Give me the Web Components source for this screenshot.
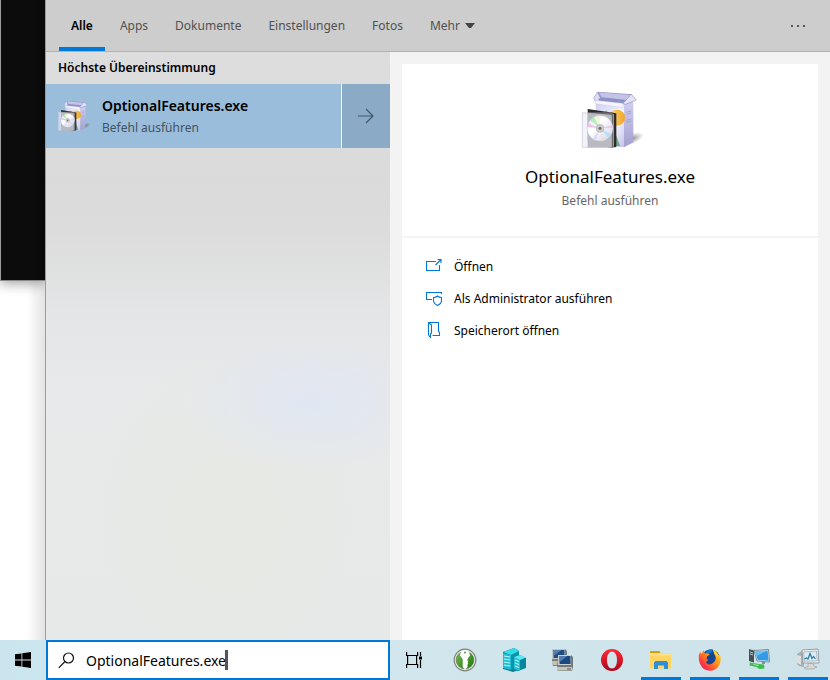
<!DOCTYPE html>
<html lang="de">
<head>
<meta charset="utf-8">
<title>Suche</title>
<style>
html, body { margin: 0; height: 100%; }
body { font-family: "Noto Sans", "Open Sans", sans-serif; font-size: 12px; color: #000; background: #fff; overflow: hidden; }
</style>
</head>
<body>
<search-screen></search-screen>

<template id="t-screen">
<style>
:host { display: flex; flex-direction: column; height: 100vh; }
.upper { flex: 1; display: flex; min-height: 0; }
desk-strip { flex: 0 0 45px; }
search-flyout { flex: 1; min-width: 0; }
</style>
<div class="upper"><desk-strip></desk-strip><search-flyout></search-flyout></div>
<task-bar></task-bar>
</template>

<template id="t-strip">
<style>
:host { display: block; background: linear-gradient(90deg, transparent 60%, #0000001c), #fff; overflow: hidden; }
.console { height: 280px; background: linear-gradient(90deg, #0c0c0c 75%, #080808); border-left: 1px solid #9c9fa0; border-bottom: 1px solid #8a8a8a; box-shadow: 0 2px 12px #00000066; }
</style>
<div class="console"></div>
</template>

<template id="t-flyout">
<style>
:host { display: flex; flex-direction: column; border-left: 1px solid #9d9d9d; }
.cols { flex: 1; display: flex; min-height: 0; }
result-list { flex: 0 0 344px; }
detail-pane { flex: 1; min-width: 0; }
</style>
<tab-strip></tab-strip>
<div class="cols"><result-list></result-list><detail-pane></detail-pane></div>
</template>

<template id="t-tabs">
<style>
:host { display: flex; justify-content: space-between; height: 51px; background: #cdcdcd; border-bottom: 1px solid #b2b2b2; padding: 0 12px 0 13px; }
nav { display: flex; gap: 3px; }
button { font: inherit; border: 0; background: none; color: #515151; padding: 0 12px; display: flex; align-items: center; gap: 5px; border-top: 4px solid transparent; border-bottom: 4px solid transparent; }
button.on { color: #000; font-weight: 600; border-bottom-color: #0078d7; }
</style>
<nav>
<button class="on">Alle</button><button>Apps</button><button>Dokumente</button><button>Einstellungen</button><button>Fotos</button>
<button>Mehr <svg width="10" height="6"><path d="M0 0h10L6 5H4z" fill="#444"/></svg></button>
</nav>
<button aria-label="Optionen"><svg width="16" height="4"><path d="M1 1h2v2h-2zM7 1h2v2h-2zM13 1h2v2h-2z" fill="#555"/></svg></button>
</template>

<template id="t-results">
<style>
:host { display: block; background:
 radial-gradient(ellipse 130px 70px at 265px 350px, #dfe6f4cc, #dfe6f400),
 radial-gradient(ellipse 140px 170px at 180px 470px, #e7e9e1aa, #e7e9e100),
 linear-gradient(180deg, #dddddd 0, #dadada 130px, #dcdcdc 180px, #e4e5e6 260px, #e7e9ea 340px, #e7e9e9 100%); }
h2 { margin: 0; padding: 0 12px; font-size: 12px; line-height: 32px; font-weight: 600; }
.hit { display: flex; height: 64px; gap: 1px; background: #f4f8fb; }
button { font: inherit; border: 0; padding: 0; text-align: left; }
.main { flex: 1; display: flex; align-items: center; gap: 12px; padding-left: 10px; background: #9abddc; }
.go { flex: 0 0 48px; display: grid; place-items: center; background: #8aaac5; }
b { display: block; font-size: 14px; line-height: 24px; font-weight: 600; }
small { display: block; font-size: 12px; line-height: 20px; color: #42525f; }
</style>
<h2>Höchste Übereinstimmung</h2>
<div class="hit">
<button class="main"><features-icon size="34"></features-icon><span><b>OptionalFeatures.exe</b><small>Befehl ausführen</small></span></button>
<button class="go" aria-label="Details"><svg width="18" height="16" fill="none" stroke="#43596b" stroke-width="1.2"><path d="M1 8h15M9 1l7 7-7 7"/></svg></button>
</div>
</template>

<template id="t-detail">
<style>
:host { display: flex; flex-direction: column; gap: 2px; background: #f3f3f3; padding: 12px 12px 0; box-sizing: border-box; }
header { background: #fff; height: 172px; box-sizing: border-box; padding-top: 26px; display: flex; flex-direction: column; align-items: center; }
h1 { margin: 13px 0 0; font-size: 17px; line-height: 28px; font-weight: 400; }
p { margin: 0; line-height: 20px; color: #666; }
ul { flex: 1; margin: 0; padding: 12px 24px; list-style: none; background: #fff; }
button { font: inherit; border: 0; background: none; padding: 0; height: 32px; display: flex; align-items: center; gap: 12px; color: #000; }
svg { fill: none; stroke: #0078d7; stroke-width: 1.1; }
</style>
<header><features-icon size="64"></features-icon><h1>OptionalFeatures.exe</h1><p>Befehl ausführen</p></header>
<ul>
<li><button><svg width="16" height="16"><path d="M10 3.500H.5v9h13V7M9.500 7L15 1.500M11.500 1.500H15V5"/></svg>Öffnen</button></li>
<li><button><svg width="16" height="16"><path d="M6 9.500H.5v-7h15V4M7.500 7.500c2 0 3-.5 4-1.500 1 1 2 1.500 4 1.500v3c0 2.500-2 4-4 5-2-1-4-2.500-4-5z"/></svg>Als Administrator ausführen</button></li>
<li><button><svg width="16" height="16"><path d="M2.500 13V.5h10v9l1 1v3H6.500M2.500.5l3 2.500v8l-1 1v3.500L2.500 13"/></svg>Speicherort öffnen</button></li>
</ul>
</template>

<template id="t-features">
<style>:host { display: block; flex: none; } svg { display: block; }</style>
<svg viewBox="9 15 192 180" role="img" aria-label="Softwarepaket" overflow="visible">
<defs>
<linearGradient id="f" x2="1" y2="1"><stop stop-color="#cfcff2"/><stop offset=".6" stop-color="#f4f4ff"/><stop offset="1" stop-color="#c3c3ea"/></linearGradient>
<linearGradient id="s" x2="0" y2="1"><stop stop-color="#cfcef0"/><stop offset="1" stop-color="#a3a1ce"/></linearGradient>
<linearGradient id="o" x2="1"><stop stop-color="#ffd878"/><stop offset="1" stop-color="#f2a52a"/></linearGradient>
<linearGradient id="c" x2="1" y2="1"><stop stop-color="#e0e6ea"/><stop offset=".4" stop-color="#fff"/><stop offset="1" stop-color="#cfcff0"/></linearGradient>
<radialGradient id="sh"><stop stop-color="#555" stop-opacity=".75"/><stop offset="1" stop-color="#777" stop-opacity="0"/></radialGradient>
</defs>
<ellipse cx="168" cy="162" rx="40" ry="16" transform="rotate(-20 168 162)" fill="url(#sh)"/>
<path d="M62 48l85 9v130l-85-8z" fill="url(#f)"/>
<path d="M147 57l28-6v121l-28 15z" fill="url(#s)"/>
<path d="M68 90l28-14 22 49H72z" fill="#9bc8b1"/><path d="M112 122l24 62-28-2z" fill="#6fa888"/>
<circle cx="126" cy="98" r="24" fill="url(#o)"/>
<path d="M68 20l102 8 2 23-26 6-74-9z" fill="#8f90c4"/><path d="M71 22l97 8-4 16-84-9z" fill="#c3c3e8"/>
<path d="M68 21l8 18-14 12-6-12z" fill="#dcdcf6" stroke="#9797c5" stroke-width="2"/>
<path d="M60 46l84 9-1 13-82-12z" fill="#f6f6ff" stroke="#adadd4"/>
<path d="M169 28l15 17-32 13-9-2z" fill="#e3e3fa" stroke="#9999c4" stroke-width="2"/>
<path d="M154 82l15-4M154 88l15-4M154 106l15-4M154 112l15-4" stroke="#9897c0" stroke-width="2"/>
<path d="M38 72l86 13v101l-18 2L38 172z" fill="#2c2c2c"/>
<path d="M38 82h75v105H38z" fill="#6e6e72"/><path d="M113 87h4v98h-4z" fill="#999"/>
<path d="M22 83l87 8v96H22z" fill="#ebebfa" fill-opacity=".6" stroke="#c4c4d0" stroke-width="2"/>
<circle cx="75" cy="130" r="39" fill="url(#c)" stroke="#aaa"/>
<g opacity=".65"><path d="M75 130L45 106l12-11z" fill="#96e8a3"/><path d="M75 130L36 126l3-12z" fill="#eea9de"/><path d="M75 130L64 93l8-2z" fill="#eef3a8"/><path d="M75 130l34 18-9 11z" fill="#a9ddf5"/><path d="M75 130l39-1-1-9z" fill="#eeb9da"/><path d="M75 130l-22 32 9 5z" fill="#d9cff5"/><path d="M75 130l4 39 9-2z" fill="#f2e4bd"/></g>
<circle cx="75" cy="130" r="12" fill="#ccc" stroke="#999"/><circle cx="75" cy="130" r="5" fill="#777"/>
</svg>
</template>

<template id="t-taskbar">
<style>
:host { display: flex; height: 40px; background: linear-gradient(90deg, #cbe5ee, #d1e6ed 45%, #cde2e9); }
button { font: inherit; border: 0; padding: 0; background: none; display: grid; place-items: center; box-sizing: border-box; }
.start { flex: 0 0 46px; }
label { flex: 0 0 344px; box-sizing: border-box; border: 2px solid #0078d7; background: #fff; display: flex; align-items: center; padding-left: 10px; }
input { border: 0; outline: 0; padding: 0; margin: 0 0 0 11px; width: 139px; field-sizing: content; font: 14px "Noto Sans", sans-serif; color: #000; background: none; }
.caret { width: 3px; height: 20px; background: #555; }
.view { flex: 0 0 48px; }
.apps { display: flex; gap: 9px; padding-left: 7px; }
.apps button { width: 40px; border-top: 3px solid transparent; border-bottom: 3px solid transparent; }
.apps button.run { border-bottom-color: #0078d7; }
svg { display: block; }
</style>
<button class="start" aria-label="Start"><svg width="16" height="16"><path d="M0 2.300L6.500 1.400V7.500H0zM7.300 1.300L16 0V7.500H7.300zM0 8.400H6.500V14.600L0 13.700zM7.300 8.400H16V16L7.300 14.700z"/></svg></button>
<label><svg width="17" height="17" fill="none" stroke="#111" stroke-width="1.2"><circle cx="10.500" cy="6" r="5"/><path d="M7 9.500L.8 15.800"/></svg><input aria-label="Suche" value="OptionalFeatures.exe" spellcheck="false"><span class="caret"></span></label>
<button class="view" aria-label="Aktive Anwendungen"><svg width="17" height="16" fill="none" stroke="#000" stroke-width="1.200"><path d="M.6 0v3.500h11V0M.6 16v-3.500h11V16M1.600 3.500v9M10.600 3.500v9M14.500 0v4M14.500 8v8"/><path d="M13 4.500h3v3h-3z" fill="#000" stroke="none"/></svg></button>
<div class="apps">
<button aria-label="KeePass"><svg width="24" height="24"><defs><linearGradient id="k" x2="1" y2="1"><stop stop-color="#7cb65c"/><stop offset="1" stop-color="#1d7908"/></linearGradient></defs><circle cx="12" cy="12" r="10.800" fill="#f5f5f2" stroke="#83857f" stroke-width="1.200"/><circle cx="12" cy="12" r="9" fill="url(#k)" stroke="#648a55" stroke-width=".6"/><path d="M8 3.500Q12 1.200 16 3.500L17 7.500 14.500 11v1.500l.8 1-.8 1 .8 1-.8 1V19L12 21.500 9.700 19v-8L7 7.500z" fill="#fff"/><circle cx="12" cy="4.600" r="1" fill="#57924a"/></svg></button>
<button aria-label="Server"><svg width="24" height="24"><path d="M1 4l11-4 5 3v19l-6 2-10-3z" fill="#087e90"/><path d="M1 5l8 2v15l-8-2z" fill="#21bcd0"/><path d="M9 7l8-4v18l-8 1z" fill="#0894aa"/><path d="M1 4l11-4 5 3-8 4z" fill="#35dbe8"/><path d="M2 8l6 1M2 11l6 1M2 14l6 1M2 17l6 1" stroke="#b7fbff" stroke-width="1.200"/><path d="M12 9l6-2 6 3v10l-8 3-4-2z" fill="#078699"/><path d="M12 9l6 3v11l-6-2z" fill="#24bfd2"/><path d="M12 9l6-2 6 2.500-6 2.500z" fill="#5be9f4"/><path d="M13 12l4 1.500M13 15l4 1.500M13 18l4 1.500" stroke="#c5fdff"/></svg></button>
<button aria-label="PuTTY"><svg width="24" height="24"><path d="M1 1h13l2 2v12l-3 3H2l-1-3z" fill="#797f80"/><path d="M1 1h13v10H1z" fill="#c3c7c2"/><path d="M2.500 2h11v8h-11z" fill="#214d86"/><path d="M2.500 2h8l-8 6z" fill="#567dae"/><path d="M1 13h13v4H1z" fill="#bfc1b9"/><g transform="translate(8 7)"><path d="M-1 0h13l2 2v10l-1 4H0l-2-1z" fill="#72797b"/><path d="M-1 0h13v10H-1z" fill="#ccd0cb"/><path d="M.5 1h11v8H.5z" fill="#194780"/><path d="M.5 1h8l-8 6z" fill="#517cad"/><path d="M-2 12h15v3.500H-2z" fill="#c5c6ba"/><path d="M8 14h4" stroke="#555"/></g></svg></button>
<button aria-label="Opera"><svg width="24" height="24"><defs><linearGradient id="op" x2="0" y2="1"><stop stop-color="#ff2937"/><stop offset="1" stop-color="#a9091e"/></linearGradient></defs><path d="M12 1a11 11 0 100 22 11 11 0 000-22zm0 2.500c3 0 5 3.500 5 8.500s-2 8.500-5 8.500S7 17 7 12s2-8.500 5-8.500z" fill="url(#op)" fill-rule="evenodd"/></svg></button>
<button class="run" aria-label="Explorer"><svg width="22" height="20"><path d="M0 1.500Q0 1 1 1h8.500l1.500 2.500H0z" fill="#dc9d09"/><path d="M0 3h21v15.500H0z" fill="#ffd562"/><path d="M0 3.500h21v2H0z" fill="#ffe18c"/><path d="M4 19v-6.500l1.500-1.500h11l1.500 1.500V19h-4v-3.500H8V19z" fill="#2d8fd6"/></svg></button>
<button class="run" aria-label="Firefox"><svg width="24" height="24"><defs><linearGradient id="fx" x1="1" x2="0" y2="1"><stop stop-color="#ffe52e"/><stop offset=".45" stop-color="#ff8a18"/><stop offset=".75" stop-color="#ff3444"/><stop offset="1" stop-color="#d81776"/></linearGradient></defs><circle cx="12.500" cy="11" r="9.500" fill="#17448f"/><path d="M9 2.500Q12 .5 15 1.500L13 5Q10 4 7 6z" fill="#1476d7"/><path d="M2 4l1.500 2L5.500 2l1.500 3.500q3-1 5 .8L9 8.500 8.500 11l2 .8q-2 1.200-2.500 2.700 3 3.500 7 .5 5-3.500 1-9.500l-1-4q4 2 6 6l.8-1.500q2 6-.3 10.500-2.500 6-9 6.300-7.500.2-10.500-7Q-.5 9 2 4z" fill="url(#fx)"/><path d="M15 1.500q5 3.500 5.500 9-2-3-4-5z" fill="#ffdc2a"/></svg></button>
<button class="run" aria-label="Remoteverbindung"><svg width="24" height="24"><path d="M2 1l5 1.500v12L2 13z" fill="#454e55"/><path d="M2 1l2-.5 5 1.500-2 .5z" fill="#c7cbcf"/><path d="M3 4l3 1M3 6l3 1" stroke="#b3cad2"/><path d="M7 2.500L21.500 1.500 22.500 14 10 13z" fill="#e1f1fa" stroke="#53646f" stroke-width=".7"/><path d="M8 3.500L20.600 2.500l1 10.200L10.800 12z" fill="#329be4"/><path d="M8 3.500L20.600 2.500 9.500 8z" fill="#68c2f5"/><path d="M15 13.500l3 .2v2.300h-3z" fill="#879099"/><path d="M3 14.500l9 1.500 5 .5.500 4-5 .5-3-2-7-1.500z" fill="#39bd4d"/><path d="M4 15.500l8 1.500-1 1.200z" fill="#a1ebaa"/></svg></button>
<button class="run" aria-label="Ressourcenmonitor"><svg width="24" height="24"><path d="M1 6l5-3 2 2v14l-5-1-2-2z" fill="#a8adaf"/><path d="M1 7l4 1v9l-4-2z" fill="#dddfe0"/><path d="M6 2l16-1 1 14-16 0z" fill="#f5f5f4" stroke="#999e9f"/><path d="M7.500 4l13-1 .8 10-13 .3z" fill="#dceaf2" stroke="#829daf" stroke-width=".6"/><path d="M8.500 11l2-1 1.500 1 2-5.500 2 5 1.500-2 2 2.500" fill="none" stroke="#277cab" stroke-width="1.200"/><path d="M12 15.500h5l1 2.500 3 1-4 2H10l-2-1 4-1.500z" fill="#d7d9d9" stroke="#9da1a2" stroke-width=".7"/></svg></button>
</div>
</template>

<script>
const define = (name, id, setup) => customElements.define(name, class extends HTMLElement {
  constructor() {
    super();
    this.attachShadow({ mode: "open" }).append(document.getElementById(id).content.cloneNode(true));
  }
  connectedCallback() { if (setup) setup(this); }
});
define("features-icon", "t-features", el => {
  const size = Number(el.getAttribute("size"));
  const svg = el.shadowRoot.querySelector("svg");
  svg.setAttribute("width", size);
  svg.setAttribute("height", size * 15 / 16);
});
define("desk-strip", "t-strip");
define("tab-strip", "t-tabs");
define("result-list", "t-results");
define("detail-pane", "t-detail");
define("search-flyout", "t-flyout");
define("task-bar", "t-taskbar");
define("search-screen", "t-screen");
</script>
</body>
</html>
